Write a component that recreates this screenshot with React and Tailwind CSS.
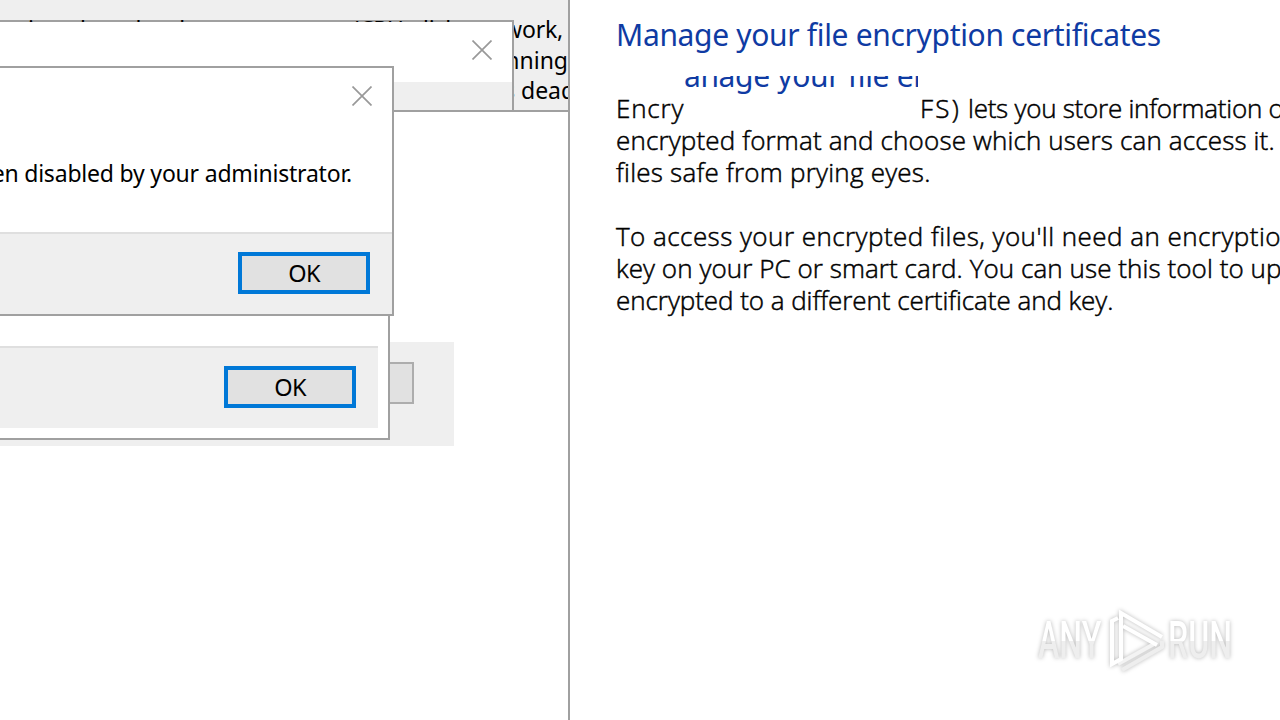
function CloseIcon({ className }) {
  return (
    <svg className={className} width="20" height="20" viewBox="0 0 20 20" fill="none" stroke="#999999" strokeWidth="1.7">
      <path d="M0.5 0.5 19.5 19.5M19.5 0.5 0.5 19.5" />
    </svg>
  );
}

function OkButton() {
  return (
    <button className="flex h-[42px] w-[132px] items-center justify-center border-4 border-[#0078d7] bg-[#e1e1e1] pt-[2px] text-[23.5px] leading-none tracking-[-0.8px]">
      OK
    </button>
  );
}

function ResourceHint() {
  return (
    <div className="h-[112px] w-[568px] shrink-0 overflow-hidden border-b-2 border-[#a0a0a0] bg-[#efefef] pt-[14px] text-[23px] leading-[30px] whitespace-nowrap">
      <div className="mb-px flex justify-end pr-[5px]">
        <p className="tracking-[-0.2px]">information about hardware resources (CPU, disk, network,</p>
      </div>
      <div className="flex justify-end">
        <p>services, and running</p>
      </div>
      <div className="pl-[504px]">
        <p>s deadlocks</p>
      </div>
    </div>
  );
}

function CertificateWizard() {
  return (
    <section className="h-[720px] w-[712px] shrink-0 overflow-hidden border-l-2 border-[#a0a0a0] bg-white pl-[46px] whitespace-nowrap">
      <h1 className="pt-[15px] text-[30px] leading-[40px] tracking-[-0.33px] text-[#0f3ba3]">
        Manage your file encryption certificates
      </h1>
      {/* leftover of the dragged title */}
      <div className="mt-[21px] ml-[67px] h-[18px] w-[235px] overflow-hidden text-[30px] leading-[40px] tracking-[-0.33px] text-[#0f3ba3]">
        <p className="-mt-[20px] -ml-[26px]">Manage your file encryption</p>
      </div>
      <div className="-mt-[2px] font-['Open_Sans'] text-[26px] leading-[32px] font-light text-black [-webkit-text-stroke:0.5px_black]">
        <div className="flex">
          <p className="w-[304px] shrink-0 tracking-[0.8px]">Encry</p>
          <p className="w-[48px] shrink-0 tracking-[2.2px]">FS)</p>
          <p className="tracking-[-0.25px]">lets you store information on your</p>
        </div>
        <p className="tracking-[0.15px]">encrypted format and choose which users can access it.</p>
        <p className="tracking-[0.23px]">files safe from prying eyes.</p>
        <p className="mt-8 tracking-[0.46px]">To access your encrypted files, you'll need an encryption</p>
        <p className="tracking-[0.07px]">key on your PC or smart card. You can use this tool to update</p>
        <p className="tracking-[-0.05px]">encrypted to a different certificate and key.</p>
      </div>
    </section>
  );
}

function Watermark() {
  return (
    <div className="absolute top-[606px] left-[1038px] flex h-[70px] items-center font-[Roboto] text-[51px] leading-[72px] font-medium drop-shadow-[0_0_2px_#b8b8b8]">
      <span className="w-[66px]">
        <span className="inline-block origin-left scale-x-[0.63] bg-linear-to-b from-white from-50% to-[#eeeeee] to-50% bg-clip-text text-transparent">ANY</span>
      </span>
      <svg className="shrink-0" width="64" height="70" viewBox="0 0 64 70" fill="none" strokeWidth="4">
        <path d="M18 64 58 41V35" stroke="#eeeeee" />
        <path d="M14 58 50 38" stroke="#f3f3f3" />
        <path d="M14 12 8 15V58L17 53V7L58 31" stroke="#ffffff" />
        <path d="M19 20 53 39" stroke="#ffffff" />
      </svg>
      <span className="w-[64px]">
        <span className="inline-block origin-left scale-x-[0.63] bg-linear-to-b from-white from-50% to-[#eeeeee] to-50% bg-clip-text text-transparent">RUN</span>
      </span>
    </div>
  );
}

export default function App() {
  return (
    <main className="relative h-[720px] w-[1280px] overflow-hidden bg-white font-['Noto_Sans','Open_Sans',sans-serif] text-black">
      <div className="flex">
        <ResourceHint />
        <CertificateWizard />
      </div>

      {/* see-through top edge, the text behind it shows through */}
      <div className="absolute top-[20px] left-0 h-[92px] w-[514px] border-t-2 border-r-2 border-b-2 border-t-black/33 border-r-[#a0a0a0] border-b-[#a0a0a0] bg-white bg-clip-padding">
        <div className="flex h-[60px] justify-end pt-[18px] pr-[20px]">
          <CloseIcon />
        </div>
        <div className="h-[28px] bg-[#efefef]" />
      </div>

      <div className="absolute top-[342px] left-0 flex h-[104px] w-[454px] bg-[#efefef] pt-5">
        <div className="h-[42px] w-[414px] border-2 border-[#adadad] bg-[#e1e1e1]" />
      </div>

      <div className="absolute top-[200px] left-0 h-[240px] w-[390px] border-r-2 border-b-2 border-[#a0a0a0] bg-white pt-[146px] pr-[10px]">
        <div className="flex h-[82px] justify-end border-t-2 border-[#dfdfdf] bg-[#efefef] pt-[18px] pr-[22px]">
          <OkButton />
        </div>
      </div>

      <div className="absolute top-[66px] left-0 flex h-[250px] w-[394px] flex-col border-t-2 border-r-2 border-b-2 border-[#a0a0a0] bg-white">
        <div className="flex justify-end pt-[18px] pr-[20px]">
          <CloseIcon />
        </div>
        <div className="flex h-[126px] justify-end overflow-hidden pt-[51px] pr-[40px]">
          <p className="text-[23px] leading-8 tracking-[-0.2px] whitespace-nowrap">This operation has been disabled by your administrator.</p>
        </div>
        <div className="flex flex-1 justify-end border-t-2 border-[#dfdfdf] bg-[#efefef] pt-[18px] pr-[22px]">
          <OkButton />
        </div>
      </div>

      <Watermark />
    </main>
  );
}
